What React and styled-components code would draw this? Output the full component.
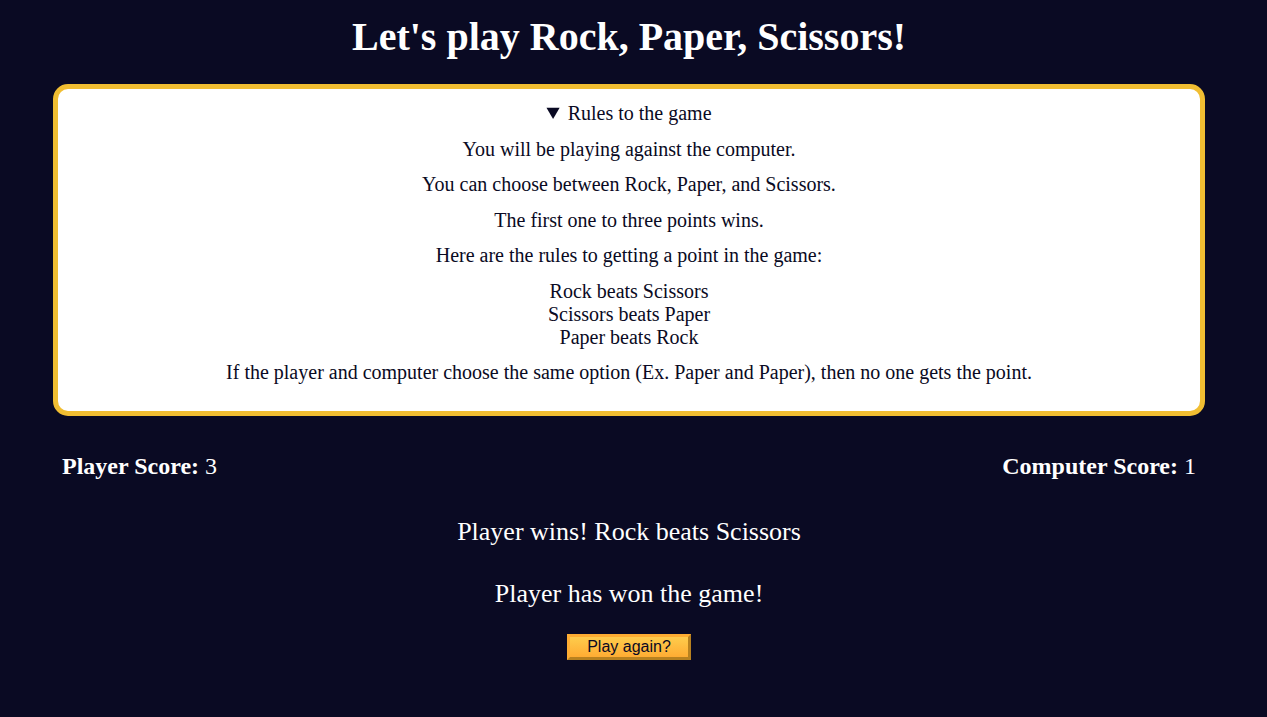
import styled, { createGlobalStyle } from "styled-components"

const GlobalStyle = createGlobalStyle`
body {
    margin: 8px 17px 8px 8px;
    background-color: #0a0a23;
    color: #ffffff;
    text-align: center;
    font-family: "Liberation Serif", "Times New Roman", serif;
}
`

const rules = [
    "You will be playing against the computer.",
    "You can choose between Rock, Paper, and Scissors.",
    "The first one to three points wins.",
    "Here are the rules to getting a point in the game:",
]

const App = () => {
    return (
        <>
            <GlobalStyle />
            <Title>Let's play Rock, Paper, Scissors!</Title>
            <RulesBox open>
                <Summary>Rules to the game</Summary>
                {rules.map((r) => (
                    <Rule key={r}>{r}</Rule>
                ))}
                <Rule>
                    Rock beats Scissors
                    <br />
                    Scissors beats Paper
                    <br />
                    Paper beats Rock
                </Rule>
                <Rule>
                    If the player and computer choose the same option (Ex. Paper and Paper), then no one gets the point.
                </Rule>
            </RulesBox>
            <Scores>
                <span>
                    <strong>Player Score:</strong> 3
                </span>
                <span>
                    <strong>Computer Score:</strong> 1
                </span>
            </Scores>
            <Results>
                <p>Player wins! Rock beats Scissors</p>
                <p>Player has won the game!</p>
            </Results>
            <ResetBtn>Play again?</ResetBtn>
        </>
    )
}

const Title = styled.h1`
    font-size: 40px;
    line-height: 46px;
    margin: 6px 0 24px;
`

const RulesBox = styled.details`
    width: 1142px;
    margin: 0 auto;
    padding: 13px 0 14px;
    border: 5px solid #f1be32;
    border-radius: 15px;
    background-color: #ffffff;
    color: #0a0a23;
    font-size: 20px;
    line-height: 23px;
`

const Summary = styled.summary`
    cursor: pointer;
`

const Rule = styled.p`
    margin: 12.5px 0;
`

const Scores = styled.div`
    display: flex;
    justify-content: space-between;
    width: 1134px;
    margin: 36px auto 0;
    font-size: 24px;
    line-height: 28px;
`

const Results = styled.div`
    font-size: 26px;
    line-height: 30px;
    margin: 37px 0 25px;
    p {
        margin: 0;
    }
    p + p {
        margin-top: 32px;
    }
`

const ResetBtn = styled.button`
    width: 124px;
    height: 26px;
    font-family: "Liberation Sans", Arial, sans-serif;
    font-size: 16px;
    color: #0a0a23;
    background-color: #feac32;
    background-image: linear-gradient(#fecc4c, #ffac33);
    border: 3px solid;
    border-color: #feac32 #b8811f #b8811f #feac32;
    padding: 0;
    cursor: pointer;
`

export default App
